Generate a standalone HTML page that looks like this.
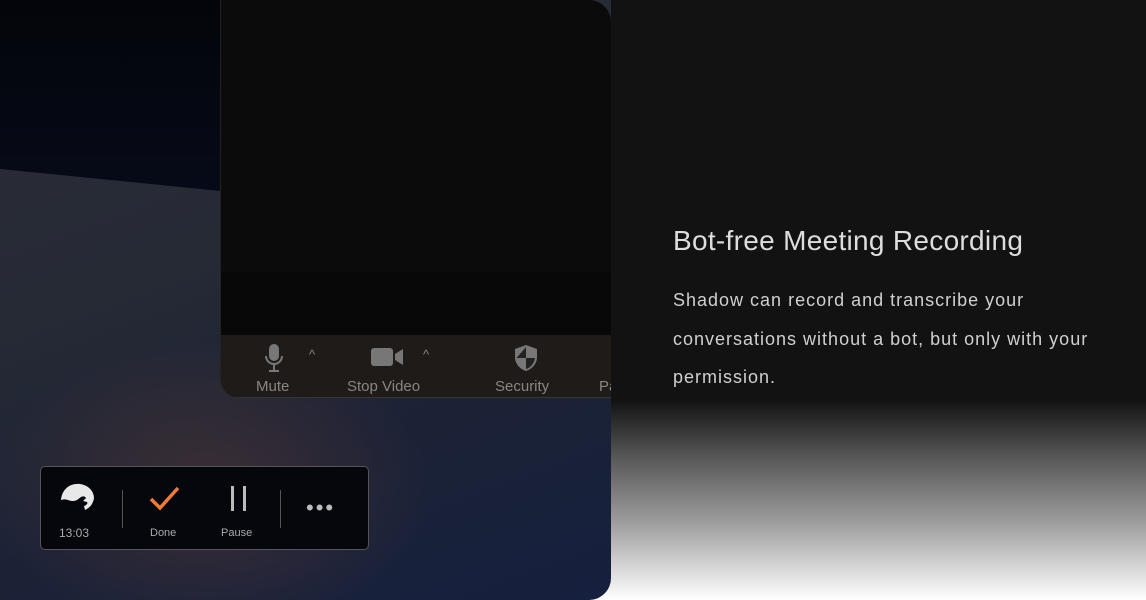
<!DOCTYPE html>
<html><head><style>
html,body{margin:0;padding:0;width:1146px;height:600px;overflow:hidden;background:linear-gradient(to bottom,#121212 0,#121212 400px,#5a5a5a 460px,#9a9a9a 520px,#fff 600px);font-family:"Liberation Sans",sans-serif;position:relative}
.left{position:absolute;left:0;top:0;width:611px;height:600px;border-bottom-right-radius:22px;overflow:hidden;
background:radial-gradient(ellipse 220px 150px at 210px 490px,rgba(110,65,50,.38),transparent 100%),linear-gradient(160deg,#2a2d38 0%,#262a35 40%,#1c2236 70%,#15203e 100%)}
.topdark{position:absolute;left:0;top:0;width:230px;height:192px;background:linear-gradient(#04050a,#060a18);clip-path:polygon(0 0,100% 0,100% 100%,0 88%)}
.zoom{position:absolute;left:220px;top:0;width:391px;height:398px;background:#0b0b0b;border-top-right-radius:22px;border-bottom-left-radius:20px;overflow:hidden;border-left:1px solid #222;box-sizing:border-box}
.band{position:absolute;left:0;top:272px;width:100%;height:63px;background:#080808}
.tb{position:absolute;left:0;top:335px;width:100%;height:63px;background:rgba(35,30,28,.85);border-bottom:1px solid #3a3530;box-sizing:border-box}
.lbl{position:absolute;top:43px;color:#8a8580;font-size:15px}
.car{position:absolute;top:12px;color:#888;font-size:13px}
.rec{position:absolute;left:40px;top:466px;width:329px;height:84px;background:#05070c;border:1px solid #555;border-radius:5px;box-sizing:border-box}
.rec .t{position:absolute;color:#aaa;font-size:11px}
.sep{position:absolute;top:23px;width:1px;height:38px;background:#555}
h1{position:absolute;left:673px;top:225px;margin:0;font-weight:normal;font-size:28px;color:#ddd;letter-spacing:.3px}
p{position:absolute;left:673px;top:281px;margin:0;width:460px;font-size:18px;line-height:38.5px;color:#d0d0d0;letter-spacing:1px}
</style></head><body>
<div class="left">
 <div class="topdark"></div>
 <div class="zoom">
  <div class="band"></div>
  <div class="tb">
   <svg style="position:absolute;left:42px;top:8px" width="22" height="30" viewBox="0 0 22 30"><rect x="6" y="1" width="10" height="17" rx="5" fill="#777"/><path d="M3 13a8 8 0 0 0 16 0M11 21v6M6 28h10" stroke="#777" stroke-width="2" fill="none"/></svg>
   <div class="car" style="left:88px">^</div>
   <div class="lbl" style="left:35px">Mute</div>
   <svg style="position:absolute;left:150px;top:12px" width="34" height="20"><rect x="0" y="1" width="22" height="18" rx="3" fill="#777"/><path d="M24 7l8-5v16l-8-5z" fill="#777"/></svg>
   <div class="car" style="left:202px">^</div>
   <div class="lbl" style="left:126px">Stop Video</div>
   <svg style="position:absolute;left:292px;top:9px" width="26" height="28" viewBox="0 0 26 28"><path d="M13 1L2 5v8c0 7 5 12 11 14 6-2 11-7 11-14V5z" fill="#777"/><path d="M13 3v11H3.5M13 14h9c-1 6-5 10-9 11z" fill="#222"/></svg>
   <div class="lbl" style="left:274px">Security</div>
   <div class="lbl" style="left:378px">Pa</div>
  </div>
 </div>
 <div class="rec">
  <svg style="position:absolute;left:17px;top:13px" width="38" height="36" viewBox="0 0 38 36"><path d="M3 20C4 9 12 3 22 4c8 1 14 7 14 14-1 7-5 10-9 12l-1-4c3-1 4-3 3-4l-4-1 3-3c-1-2-3-2-5-1-3 2-4 4-8 4-5 0-6-3-12-1z" fill="#e8e8e8"/></svg>
  <div class="t" style="left:18px;top:59px;font-size:12px">13:03</div>
  <div class="sep" style="left:81px"></div>
  <svg style="position:absolute;left:107px;top:18px" width="34" height="28"><path d="M3 14l9 9L30 3" stroke="#f07a3a" stroke-width="3.5" fill="none"/></svg>
  <div class="t" style="left:109px;top:60px">Done</div>
  <div style="position:absolute;left:190px;top:19px;width:3px;height:25px;background:#bbb"></div>
  <div style="position:absolute;left:202px;top:19px;width:3px;height:25px;background:#bbb"></div>
  <div class="t" style="left:180px;top:60px">Pause</div>
  <div class="sep" style="left:239px"></div>
  <div style="position:absolute;left:265px;top:37px;color:#bbb;font-size:22px;letter-spacing:2px;line-height:8px">•••</div>
 </div>
</div>
<h1>Bot-free Meeting Recording</h1>
<p>Shadow can record and transcribe your conversations without a bot, but only with your permission.</p>
</body></html>
